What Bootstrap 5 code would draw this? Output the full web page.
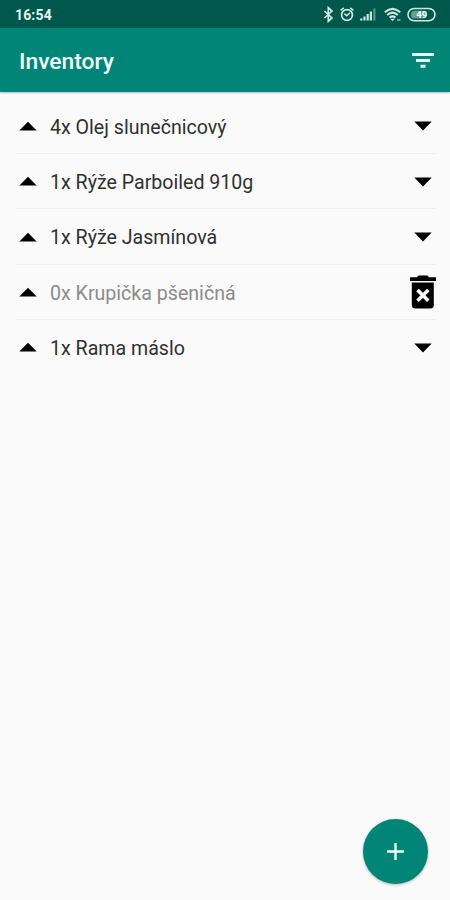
<!DOCTYPE html>
<html lang="cs">
<head>
<meta charset="utf-8">
<meta name="viewport" content="width=device-width, initial-scale=1">
<title>Inventory</title>
<link href="https://cdn.jsdelivr.net/npm/bootstrap@5.3.0/dist/css/bootstrap.min.css" rel="stylesheet">
<style>
body { font-family: Roboto, "Noto Sans", sans-serif; background: #fafafa; color: #202020; }
.screen { height: 900px; overflow: hidden; }
.statusbar { height: 28px; background: #00574b; color: #e4f3f0; padding: 1px 14px 0 15px; }
.clock { font-size: 14px; font-weight: 700; line-height: 28px; letter-spacing: .15px; }
.appbar { height: 64px; background: #008577; padding: 0 16px 0 19px; box-shadow: 0 1px 2px rgba(0,60,50,.3); }
.appbar h1 { font-size: 22.8px; font-weight: 500; color: #f4fffc; line-height: 64px; padding-top: 4px; }
.items { padding: 6.7px 14px 0 16px; }
.item-row { height: 55.4px; border: 0; border-bottom: 1px solid #efefef; padding: 0 0 0 3px; }
.item-row:last-child { border-bottom-color: transparent; }
.item-name { font-size: 19.6px; font-weight: 400; line-height: 30px; margin-left: 13px; padding-top: 3.6px; color: #303030; white-space: nowrap; }
.item-row.empty .item-name { color: #8c8c8c; }
.down { margin: 1px 4px 0 0; }
.fab { width: 65px; height: 65px; background: #008577; margin: 0 22px 16px 0; box-shadow: 0 1px 3px rgba(0,0,0,.28); }
svg { display: block; flex: none; }
</style>
</head>
<body>
<div class="screen d-flex flex-column">
  <div class="statusbar d-flex align-items-center justify-content-between">
    <span class="clock">16:54</span>
    <svg width="114" height="18" viewBox="322 6 114 18" fill="none" stroke="#cfe8e2" stroke-width="1.5">
      <path d="M324.5 11l7.5 7-3.7 3.4V7.6L332 11l-7.5 7" stroke-width="1.7"/>
      <circle cx="347" cy="15" r="5.4" stroke-width="1.7"/><path d="M340.6 10.4l3.2-2.6M353.4 10.4l-3.2-2.6M344.4 13.6l2.4 2.2 3-3"/>
      <path d="M361.3 20.5v-2M364.5 20.5v-4M367.7 20.5v-6.5M370.9 20.5v-9" stroke-width="2.2"/><path d="M374.4 20.5v-12" stroke="#5f9d91" stroke-width="2"/>
      <path d="M384.8 12.2q7.7-6.6 15.4 0M387.2 15q5.3-4.6 10.6 0M389.6 17.6q2.9-2.4 5.8 0" stroke-width="2.1"/><path d="M392.5 21.2l-2.2-2.5h4.4z" fill="#cfe8e2" stroke="none"/><path d="M397 20h3.5" stroke="#8dbdb3"/>
      <rect x="408" y="8.5" width="27" height="12.2" rx="6.1" stroke-width="1.6"/><rect x="411" y="10.8" width="15.5" height="7.8" rx="3.5" fill="#a6cdc5" stroke="none" opacity=".6"/>
      <text x="421.7" y="18.2" text-anchor="middle" font-size="9.5" font-weight="700" fill="#f0fffc" stroke="none">49</text>
    </svg>
  </div>
  <header class="appbar d-flex align-items-center justify-content-between">
    <h1 class="m-0">Inventory</h1>
    <svg width="22" height="16" viewBox="0 0 22 16" fill="#e4fffb"><path d="M0 1h22v3H0zM4 7h14v3H4zM8.5 12.7h5v3h-5z"/></svg>
  </header>
  <ul class="items list-group list-group-flush">
    <li class="item-row d-flex align-items-center"><svg width="18" height="10" viewBox="0 0 18 10"><path d="M.3 9.5L9 .8l8.7 8.7z"/></svg><span class="item-name flex-grow-1">4x Olej slunečnicový</span><svg class="down" width="18" height="10" viewBox="0 0 18 10"><path d="M.3 .5h17.4L9 9.5z"/></svg></li>
    <li class="item-row d-flex align-items-center"><svg width="18" height="10" viewBox="0 0 18 10"><path d="M.3 9.5L9 .8l8.7 8.7z"/></svg><span class="item-name flex-grow-1">1x Rýže Parboiled 910g</span><svg class="down" width="18" height="10" viewBox="0 0 18 10"><path d="M.3 .5h17.4L9 9.5z"/></svg></li>
    <li class="item-row d-flex align-items-center"><svg width="18" height="10" viewBox="0 0 18 10"><path d="M.3 9.5L9 .8l8.7 8.7z"/></svg><span class="item-name flex-grow-1">1x Rýže Jasmínová</span><svg class="down" width="18" height="10" viewBox="0 0 18 10"><path d="M.3 .5h17.4L9 9.5z"/></svg></li>
    <li class="item-row empty d-flex align-items-center"><svg width="18" height="10" viewBox="0 0 18 10"><path d="M.3 9.5L9 .8l8.7 8.7z"/></svg><span class="item-name flex-grow-1">0x Krupička pšeničná</span><svg width="26" height="34" viewBox="0 0 26 34"><path d="M0 2.3h7L8.5.5h9L19 2.3h7v3.6H0zM1.8 7.5h22v22.5q0 3.5-3.5 3.5H5.3Q1.8 33.5 1.8 30z"/><path d="M7.5 15l10.8 10.8M18.3 15L7.5 25.8" stroke="#fafafa" stroke-width="3.6"/></svg></li>
    <li class="item-row d-flex align-items-center"><svg width="18" height="10" viewBox="0 0 18 10"><path d="M.3 9.5L9 .8l8.7 8.7z"/></svg><span class="item-name flex-grow-1">1x Rama máslo</span><svg class="down" width="18" height="10" viewBox="0 0 18 10"><path d="M.3 .5h17.4L9 9.5z"/></svg></li>
  </ul>
  <button class="fab btn rounded-circle border-0 p-0 mt-auto align-self-end d-flex align-items-center justify-content-center" aria-label="Add item">
    <svg width="17" height="17" viewBox="0 0 17 17" stroke="#f0fffc" stroke-width="2.4"><path d="M8.5 0v17M0 8.5h17"/></svg>
  </button>
</div>
<script src="https://cdn.jsdelivr.net/npm/bootstrap@5.3.0/dist/js/bootstrap.bundle.min.js"></script>
</body>
</html>
